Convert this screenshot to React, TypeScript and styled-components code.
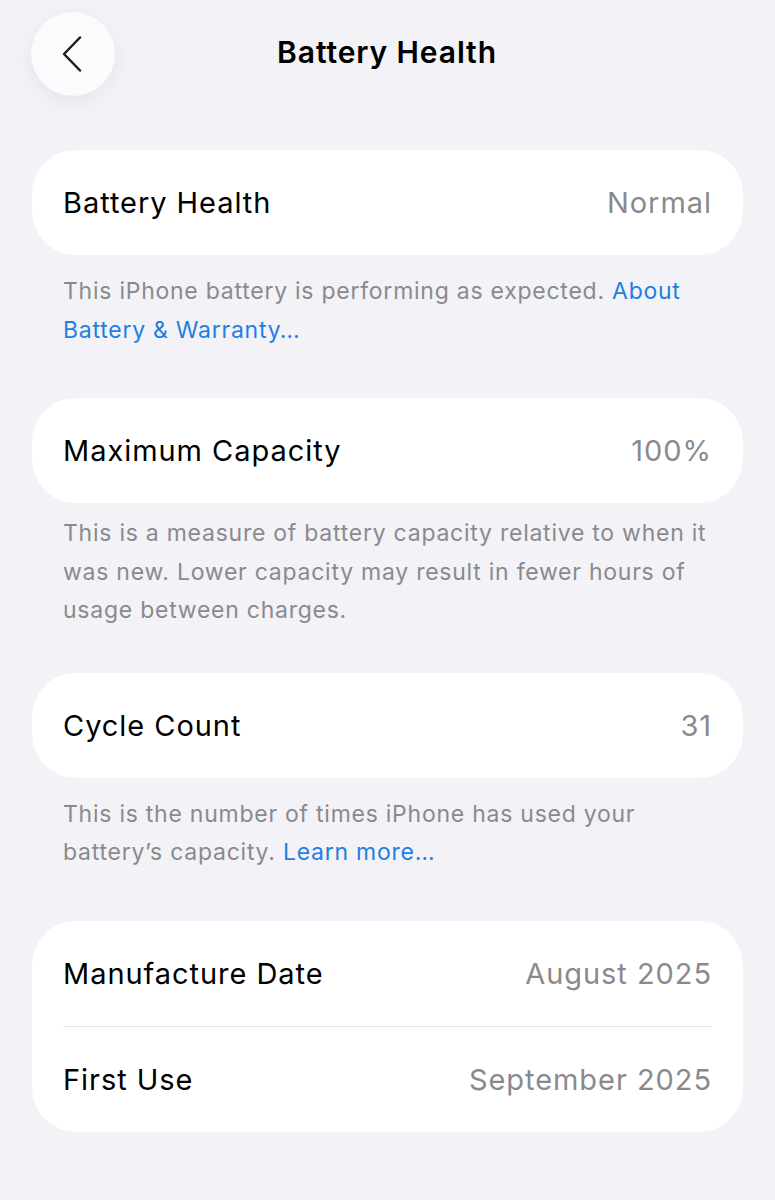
import React from 'react';
import styled, { createGlobalStyle } from 'styled-components';

const GlobalStyle = createGlobalStyle`
  html, body {
    margin: 0;
    padding: 0;
    background: #f2f2f7;
  }
  body {
    font-family: Inter, "Noto Sans", sans-serif;
    -webkit-font-smoothing: antialiased;
  }
`;

const Page = styled.div`
  width: 775px;
  min-height: 1200px;
  background: #f2f2f7;
  box-sizing: border-box;
  padding: 12px 32px 60px;
`;

const NavBar = styled.header`
  display: grid;
  grid-template-columns: 1fr auto 1fr;
  align-items: center;
  height: 84px;
  margin-left: -1px;
  margin-bottom: 54px;
`;

const BackButton = styled.button`
  width: 84px;
  height: 84px;
  border-radius: 50%;
  border: none;
  padding: 0;
  background: #fbfbfd;
  box-shadow: 0 6px 22px rgba(0, 0, 0, 0.06);
  display: flex;
  align-items: center;
  justify-content: center;
  cursor: pointer;
`;

const Title = styled.h1`
  margin: 0 0 4px;
  font-size: 30px;
  font-weight: 600;
  color: #000;
  letter-spacing: 0.9px;
`;

const Card = styled.div`
  background: #fff;
  border-radius: 44px;
  padding: 0 31px;
`;

const Row = styled.div`
  height: 105px;
  display: flex;
  align-items: center;
  justify-content: space-between;
  font-size: 29px;
  letter-spacing: 0.95px;

  & + & {
    border-top: 1.5px solid #e3e3e7;
  }
`;

const Label = styled.span`
  color: #000;
`;

const Value = styled.span`
  color: #8a8a8e;
`;

const Footer = styled.p<{ $tight?: boolean }>`
  margin: ${(p) => (p.$tight ? '11px 31px 43px' : '17px 31px 49px')};
  font-size: 23px;
  line-height: 38.5px;
  color: #8a8a8e;
  letter-spacing: 0.75px;
`;

const Link = styled.a`
  color: #1d7fe2;
  text-decoration: none;
`;

const Chevron = () => (
  <svg width="24" height="40" viewBox="0 0 24 40" fill="none">
    <path
      d="M19 3.5 L3 20 L19 36.5"
      stroke="#1c1c1e"
      strokeWidth="2.5"
      strokeLinecap="round"
      strokeLinejoin="round"
    />
  </svg>
);

const App: React.FC = () => {
  return (
    <>
      <GlobalStyle />
      <Page>
        <NavBar>
          <BackButton aria-label="Back">
            <Chevron />
          </BackButton>
          <Title>Battery Health</Title>
          <span />
        </NavBar>

        <Card>
          <Row>
            <Label>Battery Health</Label>
            <Value>Normal</Value>
          </Row>
        </Card>
        <Footer>
          This iPhone battery is performing as expected. <Link href="#">About Battery &amp; Warranty…</Link>
        </Footer>

        <Card>
          <Row>
            <Label>Maximum Capacity</Label>
            <Value>100%</Value>
          </Row>
        </Card>
        <Footer $tight>
          This is a measure of battery capacity relative to when it was new. Lower capacity may result in fewer hours of
          usage between charges.
        </Footer>

        <Card>
          <Row>
            <Label>Cycle Count</Label>
            <Value>31</Value>
          </Row>
        </Card>
        <Footer>
          This is the number of times iPhone has used your battery’s capacity. <Link href="#">Learn more…</Link>
        </Footer>

        <Card>
          <Row>
            <Label>Manufacture Date</Label>
            <Value>August 2025</Value>
          </Row>
          <Row>
            <Label>First Use</Label>
            <Value>September 2025</Value>
          </Row>
        </Card>
      </Page>
    </>
  );
};

export default App;
